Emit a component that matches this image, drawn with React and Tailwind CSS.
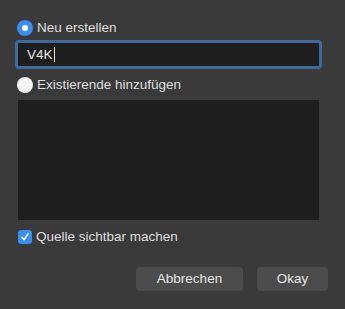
export default function App() {
  return (
    <div
      className="w-[345px] h-[309px] bg-[#3a3a3a] text-[#dfdfdf] text-[13.5px] leading-none overflow-hidden"
      style={{ fontFamily: '"Liberation Sans", Arial, sans-serif' }}
    >
      <div className="pl-[17px] pr-[23px] pt-[20px] flex flex-col">
        <div className="flex items-center h-[16px]">
          <div className="w-[16px] h-[16px] rounded-full bg-[#3a8ef2] flex items-center justify-center">
            <div className="w-[6px] h-[6px] rounded-full bg-white" />
          </div>
          <span className="ml-[4px]">Neu erstellen</span>
        </div>
        <div className="mt-[4px] -ml-[2px] w-[307px] h-[29px] rounded-[4px] border-[3px] border-[#3d6b9f] bg-[#1e1e1e] flex items-center pl-[9px]">
          <span className="text-[#e6e6e6]">V4K</span>
          <span className="w-px h-[15px] bg-[#e6e6e6] ml-px" />
        </div>
        <div className="flex items-center h-[16px] mt-[8px]">
          <div className="w-[16px] h-[16px] rounded-full bg-[#f4f4f4]" />
          <span className="ml-[4px]">Existierende hinzufügen</span>
        </div>
        <div className="mt-[7px] ml-px w-[301px] h-[120px] bg-[#1f1f1f]" />
        <div className="flex items-center h-[14px] mt-[10px] ml-px">
          <div className="w-[14px] h-[14px] rounded-[3px] bg-[#3a8ef2] flex items-center justify-center">
            <svg width="10" height="10" viewBox="0 0 10 10" fill="none">
              <path d="M2 5.3 L4.1 7.6 L8.2 1.8" stroke="white" strokeWidth="1.6" strokeLinecap="round" strokeLinejoin="round" />
            </svg>
          </div>
          <span className="ml-[4px]">Quelle sichtbar machen</span>
        </div>
        <div className="flex justify-end mt-[23px] -mr-[6px] gap-[14px]">
          <button className="w-[107px] h-[24px] rounded-[4px] bg-[#4c4c4c] text-[#e6e6e6] flex items-center justify-center">
            Abbrechen
          </button>
          <button className="w-[71px] h-[24px] rounded-[4px] bg-[#4c4c4c] text-[#e6e6e6] flex items-center justify-center">
            Okay
          </button>
        </div>
      </div>
    </div>
  );
}
